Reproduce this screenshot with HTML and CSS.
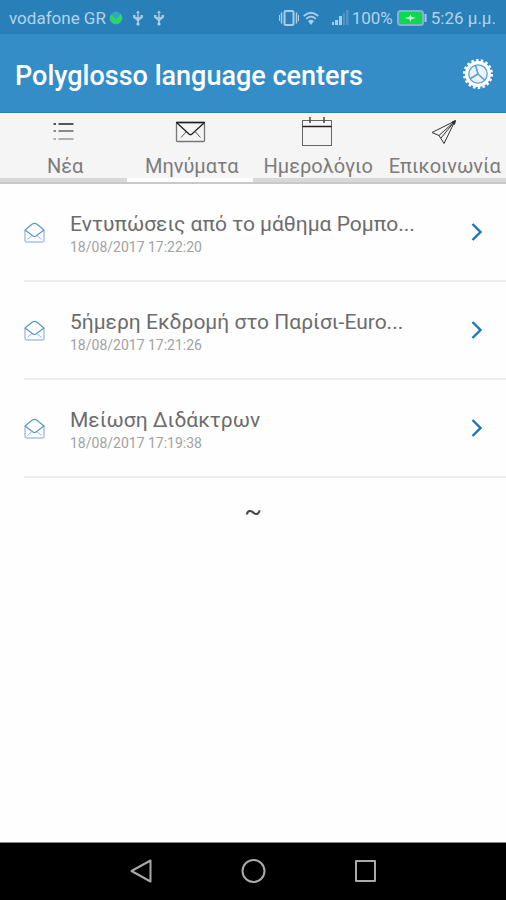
FILE: index.html
```html
<!DOCTYPE html>
<html lang="el">
<head>
    <title>Polyglosso language centers</title>
    <meta charset="UTF-8">
    <meta name="viewport" content="width=device-width, initial-scale=1">
    <link rel="stylesheet" href="styles.css">
</head>
<body>
    <div class="status-bar">
        <span class="carrier">vodafone GR</span>
        <svg class="globe" width="14" height="14" viewBox="0 0 14 14">
            <circle cx="7" cy="7" r="6.5" fill="#2fa5c4"/>
            <path d="M1 5 L3 4 L7 8 L12 3 L13.300 8 L10 12.500 L5 13 L1.500 10 Z" fill="#2fd566"/>
        </svg>
        <svg class="usb" width="12" height="18" viewBox="0 0 12 18">
            <use href="#usb"/>
        </svg>
        <svg class="usb" width="12" height="18" viewBox="0 0 12 18">
            <g id="usb" fill="#b4d3ea">
                <path d="M1 6 H3.500 V8 H5.300 V4 H4 L6 1.500 L8 4 H6.700 V8 H8.500 V6 H11 V8.500 L6.700 12 H5.300 L1 8.500 Z" opacity=".9"/>
                <path d="M5.200 11 H6.800 V15 H5.200 Z"/>
                <circle cx="6" cy="15" r="1.600"/>
            </g>
        </svg>
        <span class="spacer"></span>
        <svg width="20" height="18" viewBox="0 0 20 18" fill="none" stroke="#a9cde7">
            <rect x="5.500" y="2" width="9" height="14" rx="1.500" stroke-width="2"/>
            <path d="M2.500 3.500 V14.500 M17.500 3.500 V14.500" stroke-width="1.500"/>
            <path d="M.5 6 V12 M19.500 6 V12"/>
        </svg>
        <svg class="wifi" width="16" height="18" viewBox="0 0 16 18" fill="none" stroke="#a9cde7" stroke-width="1.800">
            <path d="M.8 7 Q8 .5 15.200 7 M3.200 9.800 Q8 5.500 12.800 9.800"/>
            <path d="M5 12 Q8 9.500 11 12 L8 16 Z" fill="#a9cde7" stroke="none"/>
        </svg>
        <svg class="signal" width="18" height="18" viewBox="0 0 18 18" fill="#a9cde7">
            <path d="M1 13 H3 V16 H1 Z M4 11 H7 V16 H4 Z M8 7 H11 V16 H8 Z"/>
            <path d="M12 4 H14 V16 H12 Z M15 1 H17.500 V16 H15 Z" opacity=".3"/>
        </svg>
        <span class="percent">100%</span>
        <svg class="battery" width="30" height="18" viewBox="0 0 30 18">
            <rect x="1" y="2" width="25" height="14" rx="2.500" fill="#0fd84c" stroke="#7fb3d6" stroke-width="2"/>
            <path d="M28.500 5 V13" stroke="#a9cde7" stroke-width="2"/>
            <path d="M8 9 L12 8 L13.500 5.500 L14.500 8 L19 9 L14.500 10 L13.500 12.500 L12 10 Z" fill="#d9ffe4"/>
        </svg>
        <span class="time">5:26 μ.μ.</span>
    </div>

    <header class="header">
        <h1>Polyglosso language centers</h1>
        <button class="settings" aria-label="Ρυθμίσεις">
            <svg width="32" height="32" viewBox="0 0 32 32" fill="none">
                <circle cx="16" cy="16" r="13.500" stroke="#fff" stroke-width="3" stroke-dasharray="2.500 2.212"/>
                <circle cx="16" cy="16" r="13" fill="#fff"/>
                <circle cx="16" cy="16" r="9.200" fill="#eaf3fa" stroke="#5d9fcf" stroke-width="1.300"/>
                <path d="M16 16 L13.500 7.200 M16 16 L8.500 20.500 M16 16 L22.500 22" stroke="#5d9fcf" stroke-width="1.600"/>
            </svg>
        </button>
    </header>

    <nav class="tabs">
        <a href="#news" class="tab">
            <svg width="32" height="30" viewBox="0 0 32 30" fill="none" stroke-width="1.500">
                <path d="M6.500 7 H9 M11.500 7 H26.500" stroke="#222"/>
                <path d="M6.500 14 H9 M11.500 14 H26.500" stroke="#666"/>
                <path d="M6.500 22 H9 M11.500 22 H26.500" stroke="#999"/>
            </svg>
            <span>Νέα</span>
        </a>
        <a href="#messages" class="tab active">
            <svg width="32" height="30" viewBox="0 0 32 30" fill="none" stroke="#222">
                <rect x="2.500" y="5.500" width="28" height="19" rx="1" stroke="#777" stroke-width="1.300"/>
                <path d="M2 5.500 H31" stroke-width="1.500"/>
                <path d="M3 6 L15 17 Q16.500 18.300 18 17 L30 6" stroke-width="1.300"/>
                <path d="M7 20.500 L12 15 M26.500 20.500 L21.500 15" stroke="#555"/>
            </svg>
            <span>Μηνύματα</span>
        </a>
        <a href="#calendar" class="tab">
            <svg width="32" height="30" viewBox="0 0 32 30" fill="none" stroke="#666">
                <rect x="2.500" y="3.500" width="29" height="25"/>
                <path d="M2.500 9.500 H31.500" stroke="#222" stroke-width="1.500"/>
                <path d="M10 0 V6 M24 0 V6" stroke="#444" stroke-width="1.500"/>
            </svg>
            <span>Ημερολόγιο</span>
        </a>
        <a href="#contact" class="tab">
            <svg width="32" height="30" viewBox="0 0 32 30" fill="none" stroke="#333" stroke-linejoin="round">
                <path d="M28 4 L5 15.500 L12 18.500 L17 26.500 Z M28 4 L12 18.500 M28 4 L14 21"/>
                <path d="M25 5 L28.500 3.500 L27.500 7.500 Z" fill="#222"/>
            </svg>
            <span>Επικοινωνία</span>
        </a>
    </nav>

    <main class="content">
        <ul class="messages">
            <li>
                <a href="#message-1" class="message">
                    <svg class="envelope" width="22" height="22" viewBox="0 0 22 22">
                        <g id="envelope" fill="none" stroke-linejoin="round">
                            <path d="M1 9 V19 Q1 21 3 21 H18 Q20 21 20 19 V9" stroke="#a9c2e6" stroke-width="1.500"/>
                            <path d="M1 9 L8 3.200 Q10.500 1.500 13 3.200 L20 9 L12 15 Q10.500 16 9 15 Z" stroke="#5b94d0" stroke-width="1.200"/>
                            <path d="M3.500 18.500 L8 14.500 M17.500 18.500 L13 14.500" stroke="#8fb2de"/>
                        </g>
                    </svg>
                    <div class="message-text">
                        <h2>Εντυπώσεις από το μάθημα Ρομπο...</h2>
                        <time>18/08/2017 17:22:20</time>
                    </div>
                    <svg class="arrow" width="12" height="20" viewBox="0 0 12 20">
                        <path id="arrow" d="M1.500 2 L9.500 10 L1.500 18" fill="none" stroke="#1a76bd" stroke-width="2.400"/>
                    </svg>
                </a>
            </li>
            <li>
                <a href="#message-2" class="message">
                    <svg class="envelope" width="22" height="22" viewBox="0 0 22 22"><use href="#envelope"/></svg>
                    <div class="message-text">
                        <h2>5ήμερη Εκδρομή στο Παρίσι-Euro...</h2>
                        <time>18/08/2017 17:21:26</time>
                    </div>
                    <svg class="arrow" width="12" height="20" viewBox="0 0 12 20"><use href="#arrow"/></svg>
                </a>
            </li>
            <li>
                <a href="#message-3" class="message">
                    <svg class="envelope" width="22" height="22" viewBox="0 0 22 22"><use href="#envelope"/></svg>
                    <div class="message-text">
                        <h2>Μείωση Διδάκτρων</h2>
                        <time>18/08/2017 17:19:38</time>
                    </div>
                    <svg class="arrow" width="12" height="20" viewBox="0 0 12 20"><use href="#arrow"/></svg>
                </a>
            </li>
        </ul>
        <p class="list-end">~</p>
    </main>

    <div class="nav-bar">
        <button aria-label="Πίσω">
            <svg width="26" height="26" viewBox="0 0 26 26"><path d="M22.500 2.500 V23.500 L3.500 13 Z"/></svg>
        </button>
        <button aria-label="Αρχική">
            <svg width="26" height="26" viewBox="0 0 26 26"><circle cx="13.500" cy="13" r="11"/></svg>
        </button>
        <button aria-label="Πρόσφατα">
            <svg width="26" height="26" viewBox="0 0 26 26"><rect x="4" y="3" width="19" height="20"/></svg>
        </button>
    </div>
</body>
</html>
```

FILE: styles.css
```css
* { box-sizing: border-box; }
body { margin: 0; min-height: 100vh; display: flex; flex-direction: column; font-family: Roboto, "Noto Sans", sans-serif; background: #fefefe; color: #555; }
a { color: inherit; text-decoration: none; }
button { padding: 0; background: none; border: none; cursor: pointer; }
svg { display: block; flex-shrink: 0; }

.status-bar { display: flex; align-items: center; height: 34px; padding: 2px 10px 0 9px; background: #297fb8; color: #b4d3ea; font-size: 17px; white-space: nowrap; }
.spacer { flex: 1; }
.globe { margin-left: 3px; }
.usb { margin-left: 9px; }
.wifi { margin-left: 4px; }
.signal { margin-left: 12px; }
.percent { margin-left: 3px; }
.battery { margin: 0 4px; }

.header { display: flex; align-items: center; justify-content: space-between; height: 79px; padding: 2px 12px 0 15px; background: #358dc7; border-bottom: 1px solid #2a7fb8; color: #fff; }
.header h1 { margin: 0; padding-top: 4px; font-size: 27px; font-weight: 500; line-height: 32px; }

.tabs { display: grid; grid-template-columns: repeat(4, 1fr); background: #f5f5f5; border-bottom: 2px solid #c8c8c8; }
.tab { display: flex; flex-direction: column; align-items: center; padding-top: 4px; border-bottom: 4px solid #d8d8d8; font-size: 20px; line-height: 24px; color: #7c7c7c; white-space: nowrap; gap: 7px; }
.tab span { padding-left: 4px; }
.tab.active { border-bottom-color: #fff; }

.content { flex: 1; }
.messages { margin: 0; padding: 0 0 0 24px; list-style: none; }
.messages li { border-bottom: 2px solid #eee; }
.message { display: flex; align-items: center; height: 96px; padding-right: 23px; }
.message-text { flex: 1; margin-left: 24px; padding-top: 4px; }
.message h2 { margin: 0; font-size: 21px; font-weight: 400; line-height: 26px; color: #6c6c6c; }
.message time { display: block; font-size: 14px; line-height: 20px; color: #a2a2a2; }
.list-end { margin: 18px 0; font-size: 26px; line-height: 30px; text-align: center; color: #444; }

.nav-bar { display: flex; justify-content: center; align-items: center; gap: 86px; height: 58px; padding-bottom: 2px; background: #000; border-top: 1px solid #888; }
.nav-bar svg { fill: none; stroke: #aaa; stroke-width: 2; stroke-linejoin: round; }
```
